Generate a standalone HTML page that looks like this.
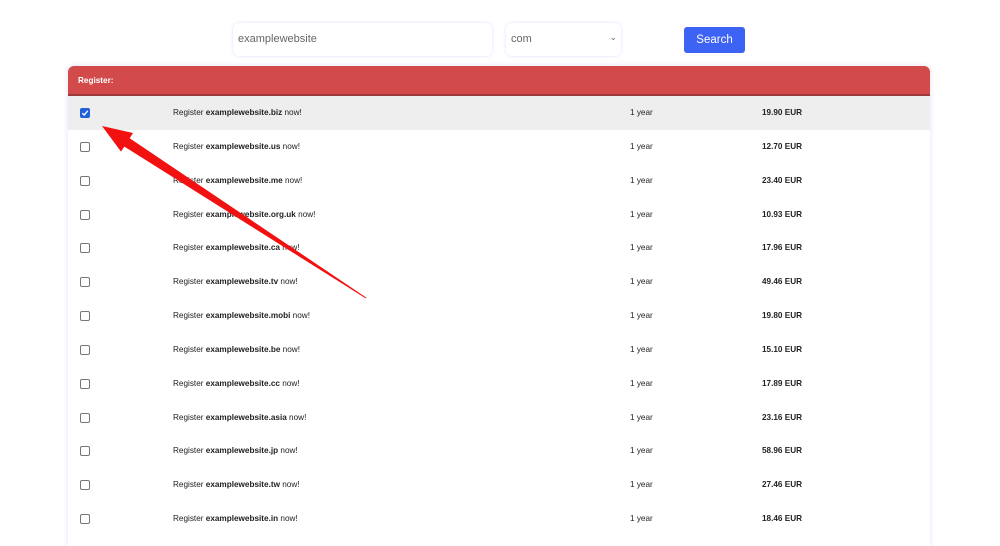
<!DOCTYPE html>
<html><head><meta charset="utf-8"><style>
*{box-sizing:border-box;margin:0;padding:0}
body{width:1000px;height:542px;overflow:hidden;background:#fff;font-family:"Liberation Sans",sans-serif;position:relative}
.inp{position:absolute;top:23px;height:33px;border-radius:6px;background:#fff;box-shadow:0 0 3px rgba(120,130,255,.25);font-size:11px;color:#666;padding:10px 5px}
.btn{position:absolute;left:684px;top:27px;width:61px;height:26px;background:#3d63f5;border-radius:3px;color:#fff;font-size:11.5px;text-align:center;line-height:26px}
.card{position:absolute;left:68px;top:66px;width:862px;height:480px;box-shadow:0 0 6px rgba(150,160,230,.3);border-radius:6px 6px 0 0;overflow:hidden}
.hd{height:30px;background:#d24b4a;border-bottom:2px solid #9c3a3a;color:#fff;font-weight:bold;font-size:8.2px;padding:10px 10px}
.row{height:33.85px;position:relative;font-size:8.2px;color:#222}
.row.s{background:#eee}
.row span{position:absolute;top:12px}
.cb{position:absolute;left:12px;top:12px;width:10px;height:10px;border:1.3px solid #777;border-radius:2px;background:#fff}
.s .cb{background:#2160d8;border-color:#2160d8}
</style></head><body>
<div class="inp" style="left:233px;width:259px">examplewebsite</div>
<div class="inp" style="left:506px;width:115px">com<span style="position:absolute;right:4px;top:9px;font-size:9px;color:#666">&#8964;</span></div>
<div class="btn">Search</div>
<div class="card">
<div class="hd">Register:</div>
<div class="row s"><div class="cb"><svg width="8" height="8" viewBox="0 0 8 8" style="position:absolute;left:0;top:0"><path d="M1.3 4.2 3.2 6 6.8 1.8" stroke="#fff" stroke-width="1.4" fill="none"/></svg></div><span style="left:105px">Register <b>examplewebsite.biz</b> now!</span><span style="left:562px">1 year</span><span style="left:694px"><b>19.90 EUR</b></span></div>
<div class="row"><div class="cb"></div><span style="left:105px">Register <b>examplewebsite.us</b> now!</span><span style="left:562px">1 year</span><span style="left:694px"><b>12.70 EUR</b></span></div>
<div class="row"><div class="cb"></div><span style="left:105px">Register <b>examplewebsite.me</b> now!</span><span style="left:562px">1 year</span><span style="left:694px"><b>23.40 EUR</b></span></div>
<div class="row"><div class="cb"></div><span style="left:105px">Register <b>examplewebsite.org.uk</b> now!</span><span style="left:562px">1 year</span><span style="left:694px"><b>10.93 EUR</b></span></div>
<div class="row"><div class="cb"></div><span style="left:105px">Register <b>examplewebsite.ca</b> now!</span><span style="left:562px">1 year</span><span style="left:694px"><b>17.96 EUR</b></span></div>
<div class="row"><div class="cb"></div><span style="left:105px">Register <b>examplewebsite.tv</b> now!</span><span style="left:562px">1 year</span><span style="left:694px"><b>49.46 EUR</b></span></div>
<div class="row"><div class="cb"></div><span style="left:105px">Register <b>examplewebsite.mobi</b> now!</span><span style="left:562px">1 year</span><span style="left:694px"><b>19.80 EUR</b></span></div>
<div class="row"><div class="cb"></div><span style="left:105px">Register <b>examplewebsite.be</b> now!</span><span style="left:562px">1 year</span><span style="left:694px"><b>15.10 EUR</b></span></div>
<div class="row"><div class="cb"></div><span style="left:105px">Register <b>examplewebsite.cc</b> now!</span><span style="left:562px">1 year</span><span style="left:694px"><b>17.89 EUR</b></span></div>
<div class="row"><div class="cb"></div><span style="left:105px">Register <b>examplewebsite.asia</b> now!</span><span style="left:562px">1 year</span><span style="left:694px"><b>23.16 EUR</b></span></div>
<div class="row"><div class="cb"></div><span style="left:105px">Register <b>examplewebsite.jp</b> now!</span><span style="left:562px">1 year</span><span style="left:694px"><b>58.96 EUR</b></span></div>
<div class="row"><div class="cb"></div><span style="left:105px">Register <b>examplewebsite.tw</b> now!</span><span style="left:562px">1 year</span><span style="left:694px"><b>27.46 EUR</b></span></div>
<div class="row"><div class="cb"></div><span style="left:105px">Register <b>examplewebsite.in</b> now!</span><span style="left:562px">1 year</span><span style="left:694px"><b>18.46 EUR</b></span></div>
</div>
<svg width="1000" height="542" style="position:absolute;left:0;top:0">
<polygon points="102,126 133,133 129.7,138.2 366.3,297.6 365.7,298.4 124.3,146.6 121,151.6" fill="#f21111"/>
</svg>
</body></html>
